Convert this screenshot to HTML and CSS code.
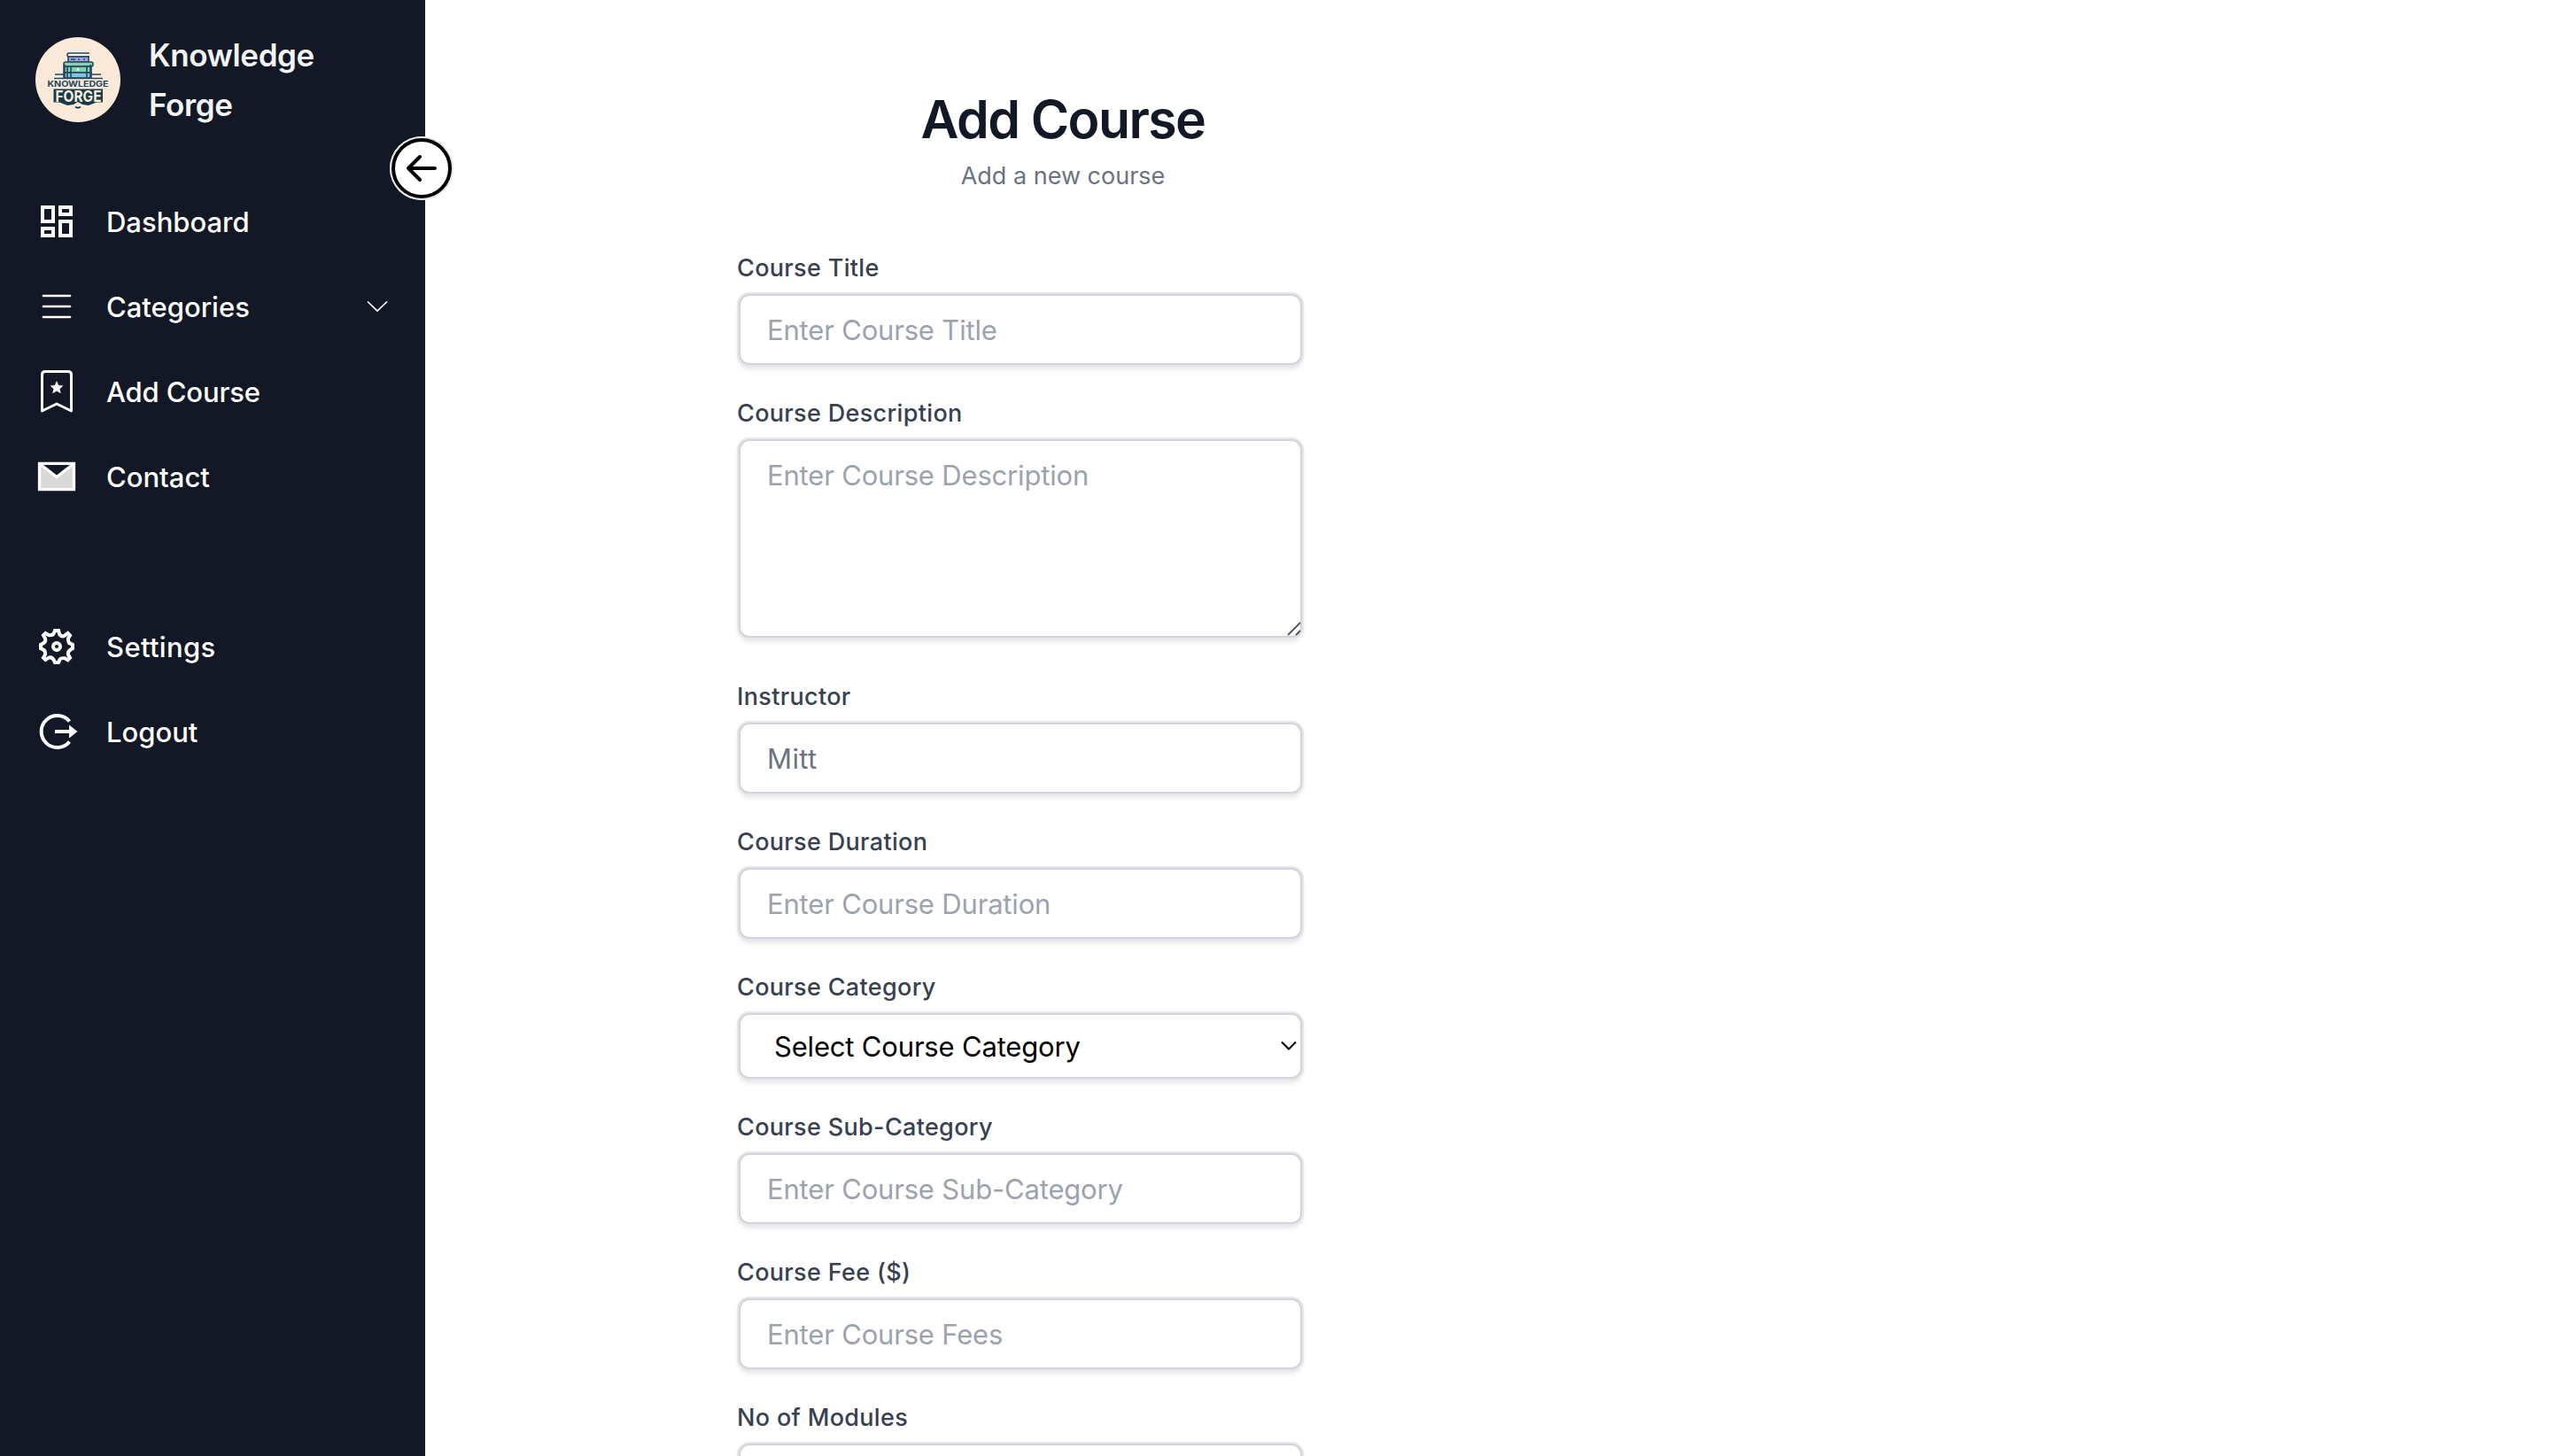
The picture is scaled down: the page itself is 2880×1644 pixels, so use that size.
FILE: index.html
```html
<!DOCTYPE html>
<html lang="en">
<head>
<meta charset="utf-8">
<title>Knowledge Forge – Add Course</title>
<link rel="stylesheet" href="styles.css">
</head>
<body>
<div class="layout">
  <aside class="sidebar">
    <button class="collapse" aria-label="Collapse sidebar">
      <svg viewBox="0 0 72 72" width="72" height="72" fill="none" stroke="#000" stroke-width="4" stroke-linecap="round" stroke-linejoin="round">
        <circle cx="36" cy="36" r="32"/>
        <path d="M51 36H21M34 23L21 36l13 13"/>
      </svg>
    </button>
    <div class="brand">
      <svg class="logo" viewBox="0 0 96 96" width="96" height="96">
        <circle cx="48" cy="48" r="48" fill="#fbead9"/>
        <g stroke="#23485a" stroke-width="1.6">
          <path d="M61 18H37.500q-1.500 0-1.500 2t1.500 2H61" fill="#fff6e4"/>
          <rect x="37" y="22" width="23" height="6" fill="#a3a5e6"/>
          <path d="M40 25h5M48 25h2M54 25h2" fill="none"/>
          <rect x="32" y="28" width="33" height="5" rx="2" fill="#8fd0b5"/>
          <rect x="32" y="33" width="31" height="7" fill="#7fcfb0"/>
          <rect x="32" y="40" width="31" height="6" fill="#80c4e4"/>
          <path d="M33 31v15M36 33v13M40 33v13M58 33v13M62 31v15M22 42h11M63 42h11M21 46.500h55" fill="none"/>
        </g>
        <circle cx="48" cy="36.500" r="1.300" fill="#fff"/>
        <path d="M20.500 58.500h55.500v15H69l-9 3.500-7-1-5-3-5 3-7 1-9-3.500h-6.500z" fill="#163c4c"/>
        <path d="M45 78.500q3 2.500 6 0" fill="none" stroke="#163c4c" stroke-width="1.800"/>
        <text class="logo-top" x="13.500" y="55.800" textLength="69" lengthAdjust="spacingAndGlyphs">KNOWLEDGE</text>
        <text class="logo-bottom" x="22.500" y="72.500" textLength="52" lengthAdjust="spacingAndGlyphs">FORGE</text>
      </svg>
      <h1 class="brand-name">Knowledge<br>Forge</h1>
    </div>
    <nav class="nav">
      <a class="item">
        <svg class="icon" viewBox="0 0 24 24" fill="#fff"><path d="M19 5v2h-4V5h4M9 5v6H5V5h4m10 8v6h-4v-6h4M9 17v2H5v-2h4M21 3h-8v6h8V3zM11 3H3v10h8V3zm10 8h-8v10h8V11zm-10 4H3v6h8v-6z"/></svg>
        <span class="item-text">Dashboard</span>
      </a>
      <a class="item">
        <svg class="icon" viewBox="0 0 48 48" fill="none" stroke="#fff" stroke-width="2.700" stroke-linecap="round"><path d="M9 12h30M9 24h30M9 36h30"/></svg>
        <span class="item-text">Categories</span>
        <svg class="chevron" viewBox="0 0 24 14" width="24" height="14" fill="none" stroke="#fff" stroke-width="1.700"><path d="M1 1.500l11 10.500L23 1.500"/></svg>
      </a>
      <a class="item">
        <svg class="icon" viewBox="0 0 48 48" fill="none" stroke="#fff" stroke-width="3"><path d="M7.500 46V5q0-3.500 3.500-3.500h26q3.500 0 3.500 3.500v41L24 38z" stroke-linejoin="round"/><path d="M24 12l2.200 4.900 5.300.5-4 3.600 1.200 5.300-4.700-2.800-4.700 2.800 1.200-5.300-4-3.600 5.300-.5z" fill="#fff" stroke="none"/></svg>
        <span class="item-text tight">Add Course</span>
      </a>
      <a class="item">
        <svg class="icon" viewBox="0 0 48 48" fill="none"><path d="M5 10l19 15 19-15v28H5z" fill="#d9d9d9"/><path d="M4.500 9.300h39v29.400h-39z" stroke="#fff" stroke-width="3.300"/><path d="M6 10.500l18 14 18-14" stroke="#fff" stroke-width="3"/></svg>
        <span class="item-text">Contact</span>
      </a>
      <a class="item item-spaced">
        <svg class="icon" viewBox="0 0 48 48" fill="none" stroke="#fff" stroke-width="4"><path d="M22 6h4l1.200 4.300q3.600 4 6.500.8L36.600 9l2.400 2.500-2 3.300q-.3 5.700 3 6L42 22v4l-2 1.200q-4 2.500-3 6l2 3.500-2.400 2.500-3.500-2q-5.500-.5-6 2.500L26 42h-4l-1.100-2.300q-2-4.500-6-3L11.400 39 9 36.600l2-3.400q.6-5-3-6L6 26v-4l2-1.200q4.300-2 3-6L9 11.400 11.400 9l3.400 2q4.600.8 6-2z"/><circle cx="24" cy="24" r="4"/></svg>
        <span class="item-text wide">Settings</span>
      </a>
      <a class="item">
        <svg class="icon" viewBox="0 0 48 48" fill="none" stroke="#fff" stroke-width="4"><path d="M38.500 12.500A18 18 0 1 0 38.500 35.500M22 24h18"/><path d="M38 16.500L47.500 24 38 31.500z" fill="#fff" stroke="none"/></svg>
        <span class="item-text">Logout</span>
      </a>
    </nav>
  </aside>
  <main class="main">
    <div class="panel">
      <header class="heading">
        <h2 class="title">Add Course</h2>
        <p class="subtitle">Add a new course</p>
      </header>
      <form class="form">
        <div class="field"><label>Course Title</label><input class="control" placeholder="Enter Course Title"></div>
        <div class="field field-area"><label>Course Description</label><textarea class="control area" placeholder="Enter Course Description"></textarea>
          <svg class="grip" viewBox="0 0 16 16" width="16" height="16" fill="none" stroke="#555" stroke-width="1.800"><path d="M1 15L15 1M10 15l5-5"/></svg></div>
        <div class="field"><label>Instructor</label><input class="control filled" value="Mitt"></div>
        <div class="field"><label>Course Duration</label><input class="control" placeholder="Enter Course Duration"></div>
        <div class="field"><label>Course Category</label>
          <div class="control select"><span class="select-text">Select Course Category</span><svg viewBox="0 0 18 12" width="18" height="12" fill="none" stroke="#000" stroke-width="2"><path d="M1 1.500l8 8 8-8"/></svg></div></div>
        <div class="field"><label>Course Sub-Category</label><input class="control" placeholder="Enter Course Sub-Category"></div>
        <div class="field"><label>Course Fee ($)</label><input class="control" placeholder="Enter Course Fees"></div>
        <div class="field"><label>No of Modules</label><input class="control"></div>
      </form>
    </div>
  </main>
</div>
</body>
</html>
```

FILE: styles.css
```css
* { box-sizing: border-box; margin: 0; padding: 0; }
html, body { height: 100%; overflow: hidden; background: #fff; }
body { font-family: Inter, "Liberation Sans", sans-serif; font-size: 31px; }
.layout { display: flex; height: 1644px; overflow: hidden; }

.sidebar { position: relative; flex: none; width: 480px; padding: 34px 40px 0; background: #121826; }
.collapse { position: absolute; left: 440px; top: 154px; width: 72px; height: 72px; border: 0; border-radius: 50%; background: #fff; box-shadow: inset 0 0 0 2px #e5e7eb; }
.collapse svg { display: block; }
.brand { display: flex; align-items: center; gap: 32px; height: 112px; }
.logo { flex: none; }
.logo-top { font: 700 9px Inter, sans-serif; fill: #23485a; }
.logo-bottom { font: 700 17.5px Inter, sans-serif; fill: #fbf0dc; }
.brand-name { font-size: 35px; line-height: 56px; font-weight: 600; letter-spacing: -.4px; color: #f3f4f6; }

.nav { display: flex; flex-direction: column; padding-top: 56px; }
.item { display: flex; align-items: center; height: 96px; color: #fff; font-size: 31px; line-height: 48px; font-weight: 500; }
.item-spaced { margin-top: 96px; }
.item-text { padding-top: 2px; }
.wide { letter-spacing: .35px; }
.tight { letter-spacing: -.15px; }
.icon { flex: none; width: 48px; height: 48px; margin-right: 32px; }
.chevron { margin-left: auto; margin-right: 2px; }

.main { flex: 1; padding: 95px 0 0 352px; }
.panel { width: 736px; }
.heading { text-align: center; }
.title { font-size: 59px; line-height: 80px; font-weight: 600; letter-spacing: -1.6px; color: #121826; }
.subtitle { margin-top: 4px; font-size: 27px; line-height: 40px; color: #6b7280; }
.form { display: flex; flex-direction: column; gap: 24px; width: 640px; margin-top: 64px; }
.field { position: relative; display: flex; flex-direction: column; }
.field label { font-size: 27px; line-height: 40px; font-weight: 500; letter-spacing: .33px; color: #374151; margin-bottom: 9px; }
.control { width: 636px; height: 80px; margin: 0 2px 11px; padding: 0 30px; border: 2px solid #d1d5db; border-radius: 12px; outline: none; background: #fff; font-family: inherit; font-size: 31px; line-height: 48px; letter-spacing: -.18px; color: #6b7280; box-shadow: 0 0 0 2px #e5e7eb, 0 4px 6px rgba(0, 0, 0, .12); }
.control::placeholder { color: #9ca3af; opacity: 1; }
.filled { letter-spacing: .4px; }
.area { height: 224px; padding-top: 15px; resize: none; }
.field-area { margin-bottom: 12px; }
.grip { position: absolute; right: 3px; bottom: 13px; }
.select { display: flex; align-items: center; justify-content: space-between; height: 74px; padding: 0 4px 0 38px; color: #000; }
.select-text { padding-top: 2px; }
```
